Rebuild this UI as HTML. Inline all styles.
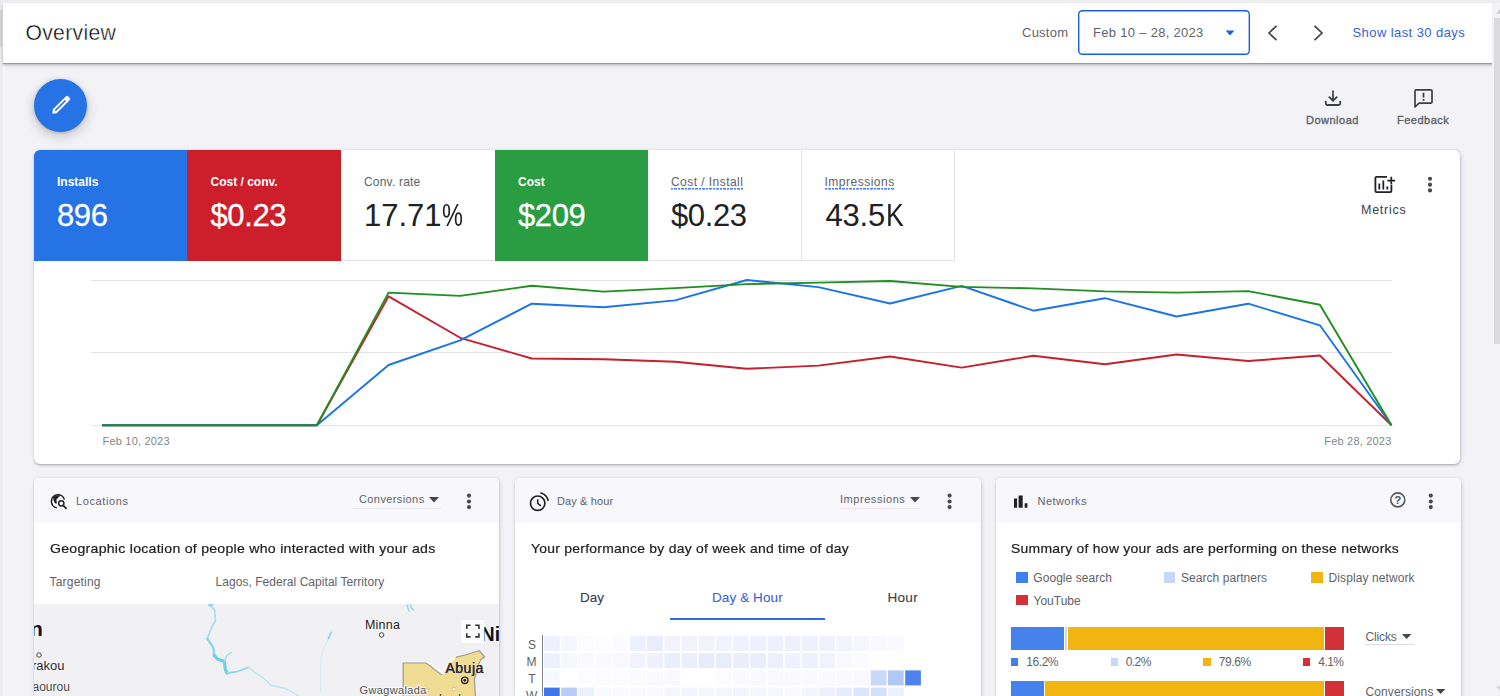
<!DOCTYPE html>
<html lang="en">
<head>
<meta charset="utf-8">
<title>Overview</title>
<style>
*{box-sizing:border-box;margin:0;padding:0}
html,body{width:1500px;height:696px;overflow:hidden}
body{background:#f2f2f7;font-family:"Liberation Sans",sans-serif;color:#202124;position:relative}
.abs{position:absolute}
.t{position:absolute;white-space:nowrap;line-height:1}
/* frame */
#topline{left:0;top:0;width:1500px;height:2.500px;background:#eeeef1}
#leftstrip{left:0;top:0;width:2.500px;height:696px;background:#ececf0}
#leftthumb{left:0;top:10px;width:2px;height:37px;background:#d4d4d9}
#leftstrip2{left:2.500px;top:64px;width:2.500px;height:632px;background:#f6f6f9}
#sbtrack{left:1492px;top:2.500px;width:8px;height:693.500px;background:#f3f3f7}
#sbthumb{left:1494.200px;top:18px;width:6px;height:325.600px;background:#dadadf}
/* header */
#hdr{left:2.500px;top:2.500px;width:1492px;height:60.500px;background:#fff;box-shadow:0 1px 0 #9a9a9e,0 2px 3px rgba(0,0,0,.28)}
#ttl{left:25.400px;top:21.600px;font-size:21.200px;color:#000;letter-spacing:.3px;-webkit-text-stroke:.4px #fff}
#custom{left:1022px;top:26px;font-size:13px;color:#5f6368;letter-spacing:.25px}
#datebox{left:1078px;top:9.500px;width:171.500px;height:45.500px;border-radius:4.500px;background:#fff;box-shadow:inset 0 0 0 1.400px #1a5fe4}
#datetxt{left:1093px;top:26px;font-size:13px;color:#5f6368;letter-spacing:.3px}
#showlast{left:1352.500px;top:25.700px;font-size:13px;color:#3760da;letter-spacing:.42px}
/* toolbar */
#fab{left:34px;top:79px;width:53px;height:53px;border-radius:50%;background:#2673e6;box-shadow:0 1px 3px rgba(60,64,67,.3),0 4px 8px 3px rgba(60,64,67,.15)}
.tool{font-size:11px;color:#5f6368;letter-spacing:.5px;-webkit-text-stroke:.35px #5f6368}
/* main card */
#card{left:34px;top:150px;width:1426px;height:314px;background:#fff;border-radius:6px;box-shadow:0 1px 2px rgba(60,64,67,.3),1px 1px 4px rgba(60,64,67,.18)}
.tile{position:absolute;top:150px;height:111px;width:154px}
.tl{position:absolute;left:23px;top:26px;font-size:12px;line-height:1;white-space:nowrap}
.tv{position:absolute;left:23px;top:49.800px;font-size:31px;letter-spacing:-.4px;line-height:1;white-space:nowrap}
.sel .tv{-webkit-text-stroke:.3px}
.sq{display:inline-block;transform-origin:0 50%}
.sel .tl{font-weight:bold;color:#fff}
.sel .tv{color:#fff}
.uns .tl{color:#5f6368;letter-spacing:.2px}
.uns .tv{color:#202124}
.dot{padding-bottom:.8px;background:repeating-linear-gradient(90deg,#4a7ff6 0,#4a7ff6 2.100px,transparent 2.100px,transparent 3.500px) 0 100%/100% 1.600px no-repeat}
/* bottom cards */
.bc{position:absolute;top:478px;height:230px;background:#fff;border-radius:5px 5px 0 0;box-shadow:0 1px 2px rgba(60,64,67,.25),1px 1px 4px rgba(60,64,67,.16);overflow:hidden}
.bch{position:absolute;left:0;top:0;right:0;height:45px;background:#f8f8fc}
.bct{font-size:11px;color:#5f6368;letter-spacing:.45px}
.bcs{font-size:13px;color:#202124;transform-origin:0 50%;letter-spacing:.25px;-webkit-text-stroke:.2px #202124}
.g12{font-size:12px;color:#5f6368}
.g13{font-size:12px;color:#5f6368}
.kd{position:absolute;width:4px;height:4px;border-radius:50%;background:#444746}
</style>
</head>
<body>
<div class="abs" id="topline"></div>
<div class="abs" id="leftstrip"></div>
<div class="abs" id="leftstrip2"></div>
<div class="abs" id="leftthumb"></div>

<!-- HEADER -->
<div class="abs" id="hdr"></div>
<div class="abs" id="sbtrack"></div>
<div class="abs" id="sbthumb"></div>
<svg class="abs" style="left:1496px;top:9px" width="5" height="5" viewBox="0 0 5 5"><path d="M0 4.500L4 .5V4.500z" fill="#c6c6cb"/></svg>
<svg class="abs" style="left:1496px;top:686px" width="5" height="5" viewBox="0 0 5 5"><path d="M0 .5H4V4.500z" fill="#cdcdd2"/></svg>
<div class="t" id="ttl">Overview</div>
<div class="t" id="custom">Custom</div>
<div class="abs" id="datebox"></div>
<div class="t" id="datetxt">Feb 10 – 28, 2023</div>
<svg class="abs" style="left:1225px;top:30px" width="10" height="6" viewBox="0 0 10 6"><path d="M0.5 0.5h9L5 5.5z" fill="#1a62e0"/></svg>
<svg class="abs" style="left:1266px;top:24px" width="14" height="18" viewBox="0 0 14 18"><path d="M10.5 1.8L3 9l7.500 7.200" fill="none" stroke="#444746" stroke-width="1.7"/></svg>
<svg class="abs" style="left:1311px;top:24px" width="14" height="18" viewBox="0 0 14 18"><path d="M3.500 1.800L11 9l-7.500 7.200" fill="none" stroke="#444746" stroke-width="1.700"/></svg>
<div class="t" id="showlast">Show last 30 days</div>

<!-- TOOLBAR -->
<div class="abs" id="fab"></div>
<svg class="abs" style="left:44.500px;top:89.400px" width="32" height="32" viewBox="-16 -16 32 32"><g transform="rotate(45)"><path d="M-2.700 -9.800a1.400 1.400 0 0 1 1.400-1.400h2.600a1.400 1.400 0 0 1 1.400 1.400V8.800L0 12.200L-2.700 8.800z" fill="#fff"/><path d="M-.8 -6.300h1.600V8h-1.600z" fill="#2673e6"/></g></svg>
<div class="t tool" id="dl" style="left:1306px;top:115px">Download</div>
<div class="t tool" id="fb" style="left:1397px;top:115px">Feedback</div>

<!-- MAIN CARD -->
<div class="abs" id="card"></div>
<div class="tile sel" style="left:34px;width:153px;background:#2673e6;border-radius:6px 0 0 0"><div class="tl">Installs</div><div class="tv">896</div></div>
<div class="tile sel" style="left:187px;background:#cc1f2b;width:154px"><div class="tl" style="left:23.500px">Cost / conv.</div><div class="tv" style="left:23.500px">$0.23</div></div>
<div class="tile uns" style="left:341px;border-bottom:1px solid #e3e3e6"><div class="tl">Conv. rate</div><div class="tv" style="letter-spacing:0">17.71<span class="sq" style="transform:scaleX(.76);margin-left:.5px">%</span></div></div>
<div class="tile sel" style="left:495px;background:#2a9d43;width:153px"><div class="tl">Cost</div><div class="tv">$209</div></div>
<div class="tile uns" style="left:648px;border-bottom:1px solid #e3e3e6;border-right:1px solid #e3e3e6;width:153.500px"><div class="tl"><span class="dot" style="letter-spacing:.45px">Cost / Install</span></div><div class="tv">$0.23</div></div>
<div class="tile uns" style="left:801.500px;border-bottom:1px solid #e3e3e6;border-right:1px solid #e3e3e6;width:153.500px"><div class="tl"><span class="dot" style="letter-spacing:.5px">Impressions</span></div><div class="tv" style="letter-spacing:-.2px;left:24px">43.5<span class="sq" style="transform:scaleX(.86);margin-left:.5px">K</span></div></div>

<!-- metrics icon + kebab -->
<svg class="abs" style="left:1373px;top:174px" width="24" height="21" viewBox="0 0 24 21"><path d="M14 2.800H3.600a1.200 1.200 0 0 0-1.200 1.200v13a1.200 1.200 0 0 0 1.200 1.200h13.600a1.200 1.200 0 0 0 1.200-1.200V11" fill="none" stroke="#202124" stroke-width="1.800"/><path d="M18.300 2.800v7.800M14.400 6.600h7.700" stroke="#202124" stroke-width="1.700" fill="none"/><path d="M6.300 9.500v6M10.300 6.500v9M14.300 12.500v3" stroke="#202124" stroke-width="1.800" fill="none"/></svg>
<div class="t" id="metrics" style="left:1361px;top:204.300px;font-size:12.500px;color:#3c4043;letter-spacing:.75px">Metrics</div>
<svg class="abs" style="left:1426px;top:174px" width="10" height="22" viewBox="0 0 10 22" fill="#444746"><circle cx="4.00" cy="4.80" r="2.050"/><circle cx="4.00" cy="10.65" r="2.050"/><circle cx="4.00" cy="16.40" r="2.050"/></svg>

<!-- CHART -->
<svg class="abs" style="left:34px;top:262px" width="1427" height="202" viewBox="34 262 1427 202">
<g stroke="#e4e4e8" stroke-width="1.200"><path d="M91 280.500H1392M91 352.500H1392M91 425.500H1392"/></g>
<g fill="none" stroke-width="1.900" stroke-linejoin="round">
<path stroke="#c5202c" d="M102.0 425.2L173.6 425.2L245.3 425.2L316.9 425.2L388.6 296.4L460.2 337.8L531.8 358.5L603.5 359.3L675.1 361.8L746.8 368.8L818.4 365.6L890.0 356.5L961.7 367.6L1033.3 355.8L1104.9 364.3L1176.6 354.5L1248.2 361.0L1319.9 355.5L1391.5 425.2"/>
<path stroke="#1a73e8" d="M102.0 425.2L173.6 425.2L245.3 425.2L316.9 425.2L388.6 365.0L460.2 340.4L531.8 303.7L603.5 307.2L675.1 300.4L746.8 280.0L818.4 287.1L890.0 303.5L961.7 285.8L1033.3 310.7L1104.9 298.2L1176.6 316.5L1248.2 303.7L1319.9 325.3L1391.5 425.2"/>
<path stroke="#1f8f1f" d="M102.0 425.2L173.6 425.2L245.3 425.2L316.9 425.2L388.6 292.6L460.2 295.9L531.8 285.8L603.5 291.6L675.1 288.1L746.8 284.1L818.4 282.6L890.0 281.0L961.7 286.9L1033.3 288.4L1104.9 291.4L1176.6 292.6L1248.2 291.1L1319.9 304.7L1391.5 425.2"/>
</g>
<text x="102.500" y="445" font-size="11" fill="#80868b" font-family="Liberation Sans, sans-serif" letter-spacing=".2">Feb 10, 2023</text>
<text x="1391.500" y="445" font-size="11" fill="#80868b" text-anchor="end" font-family="Liberation Sans, sans-serif" letter-spacing=".2">Feb 28, 2023</text>
</svg>

<!-- download / feedback icons -->
<svg class="abs" style="left:1323px;top:88px" width="20" height="20" viewBox="0 0 20 20"><path d="M10 2.500v10M5.800 8.600L10 12.700l4.200-4.100" fill="none" stroke="#3c4043" stroke-width="1.700"/><path d="M2.800 13v2.500a1.500 1.500 0 0 0 1.500 1.500h11.400a1.500 1.500 0 0 0 1.500-1.500V13" fill="none" stroke="#3c4043" stroke-width="1.800"/></svg>
<svg class="abs" style="left:1412px;top:87px" width="22" height="22" viewBox="0 0 22 22"><path d="M3 20V4a1.200 1.200 0 0 1 1.200-1.200h14.600A1.200 1.200 0 0 1 20 4v11a1.200 1.200 0 0 1-1.200 1.200H7z" fill="none" stroke="#3c4043" stroke-width="1.700" stroke-linejoin="round"/><path d="M11.500 5.800v4.600M11.500 12v1.800" stroke="#3c4043" stroke-width="1.800" fill="none"/></svg>

<!-- LOCATIONS CARD -->
<div class="bc" id="c1" style="left:34px;width:465px">
  <div class="bch"></div>
  <svg class="abs" style="left:16px;top:15px" width="18" height="17" viewBox="0 0 18 17"><path d="M14.370 6.590A6.600 6.600 0 1 0 6.850 14.800" fill="none" stroke="#202124" stroke-width="1.600"/><path d="M3 4.500C5 2 8 1.800 10 2.600C9 4.500 7.500 5 6.500 6.500C6 8 7.500 9 6.500 10.500C5.500 11.500 3.500 9 3 4.500z" fill="#202124"/><circle cx="11.300" cy="10.300" r="4.200" fill="#f8f8fc"/><circle cx="11.300" cy="10.300" r="2.600" fill="none" stroke="#202124" stroke-width="1.500"/><path d="M13.200 12.300L16.600 15.800" stroke="#202124" stroke-width="1.700"/></svg>
  <div class="t bct" style="left:42px;top:18px;letter-spacing:.6px">Locations</div>
  <div class="t bct" style="left:325px;top:16.100px;letter-spacing:.4px">Conversions</div>
  <svg class="abs" style="left:395px;top:19.200px" width="10" height="6" viewBox="0 0 10 6"><path d="M0 0h10L5 5.500z" fill="#444746"/></svg>
  <div class="abs" style="left:319px;top:30px;width:88px;height:1px;background:#e9e9ef"></div>
  <svg class="abs" style="left:431px;top:13px" width="10" height="22" viewBox="0 0 10 22" fill="#444746"><circle cx="4.00" cy="4.60" r="2.050"/><circle cx="4.00" cy="10.50" r="2.050"/><circle cx="4.00" cy="16.10" r="2.050"/></svg>
  <div class="t bcs" id="s1" style="left:15.500px;top:64px;transform:scaleX(1.084)">Geographic location of people who interacted with your ads</div>
  <div class="t g12" style="left:15.500px;top:98px;letter-spacing:.2px">Targeting</div>
  <div class="t g12" id="lagos" style="left:181.500px;top:98px;letter-spacing:.05px">Lagos, Federal Capital Territory</div>
  <!-- map -->
  <svg class="abs" style="left:0;top:126px" width="466" height="104" viewBox="34 604 466 104" font-family="Liberation Sans, sans-serif">
    <rect x="34" y="604" width="466" height="104" fill="#f1f0f3"/>
    <defs><filter id="bl" x="-5%" y="-5%" width="110%" height="110%"><feGaussianBlur stdDeviation=".45"/></filter></defs><g fill="none" stroke="#79d2e6" stroke-linejoin="round" stroke-linecap="round" filter="url(#bl)">
      <path d="M209.500 605.300h2.400" stroke-width="2.400" stroke="#7fd4e8"/>
      <path d="M210.700 605.500L214.600 610.300L215.500 620.700L212 626.900L209.300 633.100L207.200 638.600" stroke-width="1.700" stroke="#a6dfec"/>
      <path d="M207.200 638.600L213.400 647.600L214.100 655.200" stroke-width="2.200" stroke="#86d6e8"/>
      <path d="M214.100 655.200L217.600 659.300L224.500 661.400L225.200 669L227 673.100" stroke-width="3.200" stroke="#6fcfe3"/>
      <path d="M227 673.100L236.900 671.700L248.600 667.300" stroke-width="1.700" stroke="#8bd8e9"/>
      <path d="M248.600 667.300L254.800 672.400L263.100 677.900L271.400 685.500L285.200 688.300L297.600 695.200L303 699" stroke-width="1.400" stroke="#bde7f0"/>
      <path d="M224.500 661.400L226.600 655.900L231.400 652.400" stroke-width="1.400" stroke="#a3deec"/>
      <path d="M327.900 640L323.100 649.700L320.800 657.900L320.600 692" stroke-width="1.200" stroke="#d6eef4"/>
      <path d="M331 632.400L328.600 638.500" stroke-width="1.900" stroke="#8fd8e9"/>
      <path d="M407 605L409 611M410 604.500L411.500 608L413.500 610" stroke-width="1.400" stroke="#8fd8e9"/>
    </g>
    <path d="M403.200 663H426.400L441.600 674.700L454.400 657.600L467 654.500L479.200 650.700L482 654L484.800 656.800L481 659.500L479.200 663L474.400 679L476 708H403.200z" fill="#f1dc93" stroke="#9c9a94" stroke-width="1.200" stroke-linejoin="round"/>
    <path d="M426.400 663L441.600 674.700L454.400 657.600" fill="none" stroke="#fdfdfd" stroke-width="2.400" transform="translate(.8 -1.600)"/>
    <g stroke="#f6f5f8" stroke-width="3" stroke-linejoin="round" paint-order="stroke">
      <text x="30" y="636" font-size="21" font-weight="bold" fill="#111">n</text>
      <text x="480.800" y="641.300" font-size="19.300" font-weight="bold" fill="#111">Ni</text>
      <text x="32" y="669.500" font-size="13" fill="#2b2b2b" stroke-width="2.500">rakou</text>
      <text x="32.500" y="691" font-size="12" fill="#4a4a4a" stroke-width="2.500">aourou</text>
      <text x="365" y="629" font-size="12.500" fill="#222" letter-spacing=".2">Minna</text>
      <text x="359.500" y="693.500" font-size="11" fill="#555" stroke-width="2.500" letter-spacing=".35">Gwagwalada</text>
    </g>
    <text x="445.500" y="672.800" font-size="14" fill="#2a2a3c" stroke="#f1dc93" stroke-width="1.500" paint-order="stroke" letter-spacing=".5">Abuja</text>
    <text x="445.500" y="672.800" font-size="14" fill="#2a2a3c" stroke="#2a2a3c" stroke-width=".15" letter-spacing=".5">Abuja</text>
    <text x="439" y="702.200" font-size="11.500" fill="#3a3a44">Lugbe</text>
    <circle cx="39" cy="655" r="2.200" fill="#fff" stroke="#444" stroke-width="1"/>
    <circle cx="381.600" cy="634.900" r="2.200" fill="#fff" stroke="#444" stroke-width="1"/>
    <circle cx="464.800" cy="680.300" r="3.200" fill="#f1dc93" stroke="#26263a" stroke-width="1.400"/><circle cx="464.800" cy="680.300" r="1.400" fill="#26263a"/>
    <rect x="425.500" y="688.500" width="3" height="3" fill="#fff" stroke="#c9b870" stroke-width=".6"/>
    <rect x="452.500" y="687.500" width="3" height="3" fill="#fff" stroke="#c9b870" stroke-width=".6"/>
    <rect x="461.300" y="620" width="23" height="23" fill="#fdfdfe"/>
    <path d="M466.800 629v-3.700h3.700M475.200 625.300h3.700v3.700M478.900 633.200v3.700h-3.700M470.500 636.900h-3.700v-3.700" fill="none" stroke="#333" stroke-width="1.600"/>
  </svg>
</div>

<!-- DAY & HOUR CARD -->
<div class="bc" id="c2" style="left:515px;width:465.500px">
  <div class="bch"></div>
  <svg class="abs" style="left:13px;top:12px" width="24" height="22" viewBox="0 0 24 22"><circle cx="9.700" cy="13.200" r="7.200" fill="none" stroke="#202124" stroke-width="1.700"/><path d="M9.700 9.200v4.200l3.200 2.500" fill="none" stroke="#202124" stroke-width="1.500"/><path d="M12.310 2.720A10.800 10.800 0 0 1 20.260 10.950" fill="none" stroke="#202124" stroke-width="1.600"/><path d="M13.300 4.900A9 9 0 0 1 18.300 10.300" fill="none" stroke="#f8f8fc" stroke-width="1.300"/></svg>
  <div class="t bct" style="left:42px;top:18px;letter-spacing:.12px">Day &amp; hour</div>
  <div class="t bct" style="left:325px;top:16.100px;letter-spacing:.55px">Impressions</div>
  <svg class="abs" style="left:394.700px;top:19.200px" width="10" height="6" viewBox="0 0 10 6"><path d="M0 0h10L5 5.500z" fill="#444746"/></svg>
  <div class="abs" style="left:325px;top:30px;width:80px;height:1px;background:#eee6ec"></div>
  <svg class="abs" style="left:430px;top:13px" width="10" height="22" viewBox="0 0 10 22" fill="#444746"><circle cx="4.60" cy="4.60" r="2.050"/><circle cx="4.60" cy="10.50" r="2.050"/><circle cx="4.60" cy="16.10" r="2.050"/></svg>
  <div class="t bcs" id="s2" style="left:15.500px;top:64px;transform:scaleX(1.069)">Your performance by day of week and time of day</div>
  <div class="t" id="tab1" style="left:65px;top:112.900px;font-size:13.500px;-webkit-text-stroke:.1px;color:#3c4043">Day</div>
  <div class="t" id="tab2" style="left:197px;top:112.900px;font-size:13.500px;-webkit-text-stroke:.1px;letter-spacing:.1px;color:#3d64d8">Day &amp; Hour</div>
  <div class="t" id="tab3" style="left:372.500px;top:112.900px;font-size:13.500px;-webkit-text-stroke:.1px;letter-spacing:.3px;color:#3c4043">Hour</div>
  <div class="abs" style="left:155px;top:140px;width:154.500px;height:2px;background:#2a6fe8"></div>
  <div class="abs" style="left:27px;top:157px;width:1px;height:80px;background:#80868b"></div>
  <div class="t g12" style="left:13px;top:160.700px;width:8px;text-align:center">S</div>
  <div class="t g12" style="left:11.500px;top:177.800px;width:10px;text-align:center">M</div>
  <div class="t g12" style="left:13px;top:194.800px;width:8px;text-align:center">T</div>
  <div class="t g12" style="left:11px;top:212px;width:11px;text-align:center">W</div>
  <svg class="abs" id="heat" style="left:28.700px;top:158px" width="380" height="72" viewBox="0 0 380 72"><rect x="0.0" y="0.0" width="15.700" height="15" fill="#eef1fd"/><rect x="17.2" y="0.0" width="15.700" height="15" fill="#f5f6fe"/><rect x="34.4" y="0.0" width="15.700" height="15" fill="#fcfcff"/><rect x="51.6" y="0.0" width="15.700" height="15" fill="#fdfcfe"/><rect x="68.8" y="0.0" width="15.700" height="15" fill="#fbfafe"/><rect x="86.0" y="0.0" width="15.700" height="15" fill="#edf0fd"/><rect x="103.2" y="0.0" width="15.700" height="15" fill="#e8ecfc"/><rect x="120.4" y="0.0" width="15.700" height="15" fill="#f3f2fc"/><rect x="137.6" y="0.0" width="15.700" height="15" fill="#f2f2fc"/><rect x="154.8" y="0.0" width="15.700" height="15" fill="#f1f2fc"/><rect x="172.0" y="0.0" width="15.700" height="15" fill="#f0f2fc"/><rect x="189.2" y="0.0" width="15.700" height="15" fill="#eff1fc"/><rect x="206.4" y="0.0" width="15.700" height="15" fill="#eef0fc"/><rect x="223.6" y="0.0" width="15.700" height="15" fill="#eef0fc"/><rect x="240.8" y="0.0" width="15.700" height="15" fill="#eff0fc"/><rect x="258.0" y="0.0" width="15.700" height="15" fill="#eef0fc"/><rect x="275.2" y="0.0" width="15.700" height="15" fill="#f0f1fc"/><rect x="292.4" y="0.0" width="15.700" height="15" fill="#f3f3fd"/><rect x="309.6" y="0.0" width="15.700" height="15" fill="#f6f6fe"/><rect x="326.8" y="0.0" width="15.700" height="15" fill="#f8f8fe"/><rect x="344.0" y="0.0" width="15.700" height="15" fill="#f9f9fe"/><rect x="0.0" y="17.2" width="15.700" height="15" fill="#eef0fd"/><rect x="17.2" y="17.2" width="15.700" height="15" fill="#f7f7fe"/><rect x="34.4" y="17.2" width="15.700" height="15" fill="#f9f9fe"/><rect x="51.6" y="17.2" width="15.700" height="15" fill="#f9f9fe"/><rect x="68.8" y="17.2" width="15.700" height="15" fill="#f8f8fe"/><rect x="86.0" y="17.2" width="15.700" height="15" fill="#f3f3fd"/><rect x="103.2" y="17.2" width="15.700" height="15" fill="#eef0fd"/><rect x="120.4" y="17.2" width="15.700" height="15" fill="#e8eefd"/><rect x="137.6" y="17.2" width="15.700" height="15" fill="#eaeffd"/><rect x="154.8" y="17.2" width="15.700" height="15" fill="#e6ecfc"/><rect x="172.0" y="17.2" width="15.700" height="15" fill="#e8edfc"/><rect x="189.2" y="17.2" width="15.700" height="15" fill="#eaeefc"/><rect x="206.4" y="17.2" width="15.700" height="15" fill="#e9edfc"/><rect x="223.6" y="17.2" width="15.700" height="15" fill="#edf0fc"/><rect x="240.8" y="17.2" width="15.700" height="15" fill="#eff1fc"/><rect x="258.0" y="17.2" width="15.700" height="15" fill="#eef0fc"/><rect x="275.2" y="17.2" width="15.700" height="15" fill="#f1f2fd"/><rect x="292.4" y="17.2" width="15.700" height="15" fill="#f8f8fe"/><rect x="309.6" y="17.2" width="15.700" height="15" fill="#fbfbfe"/><rect x="0.0" y="34.4" width="15.700" height="15" fill="#f7f8fe"/><rect x="34.4" y="34.4" width="15.700" height="15" fill="#fcfcfe"/><rect x="51.6" y="34.4" width="15.700" height="15" fill="#fcfcfe"/><rect x="68.8" y="34.4" width="15.700" height="15" fill="#fcfcfe"/><rect x="86.0" y="34.4" width="15.700" height="15" fill="#fbfbfe"/><rect x="103.2" y="34.4" width="15.700" height="15" fill="#f9f9fe"/><rect x="120.4" y="34.4" width="15.700" height="15" fill="#f8f8fe"/><rect x="172.0" y="34.4" width="15.700" height="15" fill="#fcfcfe"/><rect x="189.2" y="34.4" width="15.700" height="15" fill="#fafafe"/><rect x="206.4" y="34.4" width="15.700" height="15" fill="#f8f8fe"/><rect x="223.6" y="34.4" width="15.700" height="15" fill="#f9f9fe"/><rect x="240.8" y="34.4" width="15.700" height="15" fill="#fafafe"/><rect x="258.0" y="34.4" width="15.700" height="15" fill="#fafafe"/><rect x="275.2" y="34.4" width="15.700" height="15" fill="#fafafe"/><rect x="292.4" y="34.4" width="15.700" height="15" fill="#fafafe"/><rect x="309.6" y="34.4" width="15.700" height="15" fill="#f8f8fe"/><rect x="326.8" y="34.4" width="15.700" height="15" fill="#c8d8f8"/><rect x="344.0" y="34.4" width="15.700" height="15" fill="#b0c8f5"/><rect x="361.2" y="34.4" width="15.700" height="15" fill="#4f82ee"/><rect x="0.0" y="51.6" width="15.700" height="15" fill="#3f75ea"/><rect x="17.2" y="51.6" width="15.700" height="15" fill="#b8ccf6"/><rect x="34.4" y="51.6" width="15.700" height="15" fill="#eaf0fd"/><rect x="51.6" y="51.6" width="15.700" height="15" fill="#f9f9fe"/><rect x="68.8" y="51.6" width="15.700" height="15" fill="#fafafe"/><rect x="86.0" y="51.6" width="15.700" height="15" fill="#fafafe"/><rect x="103.2" y="51.6" width="15.700" height="15" fill="#f8f8fe"/><rect x="120.4" y="51.6" width="15.700" height="15" fill="#f5f6fd"/><rect x="137.6" y="51.6" width="15.700" height="15" fill="#f3f4fd"/><rect x="154.8" y="51.6" width="15.700" height="15" fill="#f4f5fd"/><rect x="172.0" y="51.6" width="15.700" height="15" fill="#f4f5fd"/><rect x="189.2" y="51.6" width="15.700" height="15" fill="#f3f4fd"/><rect x="206.4" y="51.6" width="15.700" height="15" fill="#f5f6fd"/><rect x="223.6" y="51.6" width="15.700" height="15" fill="#f7f7fe"/><rect x="240.8" y="51.6" width="15.700" height="15" fill="#f8f8fe"/><rect x="258.0" y="51.6" width="15.700" height="15" fill="#f3f4fd"/><rect x="275.2" y="51.6" width="15.700" height="15" fill="#eef1fc"/><rect x="292.4" y="51.6" width="15.700" height="15" fill="#e6ecfc"/><rect x="309.6" y="51.6" width="15.700" height="15" fill="#dce6fb"/><rect x="326.8" y="51.6" width="15.700" height="15" fill="#d4e0fa"/><rect x="344.0" y="51.6" width="15.700" height="15" fill="#ecf1fd"/></svg>
</div>

<!-- NETWORKS CARD -->
<div class="bc" id="c3" style="left:995.500px;width:465px">
  <div class="bch"></div>
  <svg class="abs" style="left:17px;top:17px" width="16" height="14" viewBox="0 0 16 14"><path d="M1 3.600h3.100v9.200H1zM5.600 .6h4.100v12.200H5.600zM11.700 8.300h2.700v4.500h-2.700z" fill="#202124"/></svg>
  <div class="t bct" style="left:42px;top:18px">Networks</div>
  <svg class="abs" style="left:393px;top:13px" width="18" height="18" viewBox="0 0 18 18"><circle cx="8.800" cy="8.900" r="7" fill="none" stroke="#54575b" stroke-width="1.600"/><text x="8.800" y="13.100" font-size="11.500" text-anchor="middle" fill="#54575b" font-family="Liberation Sans, sans-serif" font-weight="bold">?</text></svg>
  <svg class="abs" style="left:430px;top:13px" width="10" height="22" viewBox="0 0 10 22" fill="#444746"><circle cx="4.80" cy="4.60" r="2.050"/><circle cx="4.80" cy="10.50" r="2.050"/><circle cx="4.80" cy="16.10" r="2.050"/></svg>
  <div class="t bcs" id="s3" style="left:15px;top:64px;transform:scaleX(1.071)">Summary of how your ads are performing on these networks</div>
  <div class="abs" style="left:20.700px;top:93.800px;width:11.700px;height:11.200px;background:#4080ee"></div>
  <div class="t g13" style="left:37.800px;top:93.800px;letter-spacing:.05px">Google search</div>
  <div class="abs" style="left:168.300px;top:93.800px;width:11.700px;height:11.200px;background:#c5d8fa"></div>
  <div class="t g13" style="left:185.500px;top:93.800px;letter-spacing:.05px">Search partners</div>
  <div class="abs" style="left:315.400px;top:93.800px;width:11.700px;height:11.200px;background:#f2b314"></div>
  <div class="t g13" style="left:333px;top:93.800px;letter-spacing:.1px">Display network</div>
  <div class="abs" style="left:20.700px;top:116.500px;width:11.700px;height:10.800px;background:#d03238"></div>
  <div class="t g13" style="left:38px;top:116.800px">YouTube</div>
  <!-- bar 1 -->
  <div class="abs" style="left:15.800px;top:149.200px;width:52.500px;height:22.800px;background:#4682ec"></div>
  <div class="abs" style="left:69.800px;top:149.200px;width:2px;height:22.800px;background:#c5d8fa"></div>
  <div class="abs" style="left:72.800px;top:149.200px;width:255.700px;height:22.800px;background:#f0b510"></div>
  <div class="abs" style="left:329.500px;top:149.200px;width:18.600px;height:22.800px;background:#d03238"></div>
  <div class="abs" style="left:15px;top:180px;width:7.500px;height:7.500px;background:#4080ee"></div>
  <div class="t g12" style="left:30.800px;top:178px;letter-spacing:-.45px">16.2%</div>
  <div class="abs" style="left:115.300px;top:180px;width:7px;height:7.500px;background:#c5d8fa"></div>
  <div class="t g12" style="left:130.300px;top:178px;letter-spacing:-.6px">0.2%</div>
  <div class="abs" style="left:207.800px;top:180px;width:7.500px;height:7.500px;background:#f2b314"></div>
  <div class="t g12" style="left:223.200px;top:178px;letter-spacing:-.4px">79.6%</div>
  <div class="abs" style="left:307px;top:180px;width:7.500px;height:7.500px;background:#d03238"></div>
  <div class="t g12" style="left:322.800px;top:178px;letter-spacing:-.55px">4.1%</div>
  <div class="t g12" style="left:370px;top:152.500px;letter-spacing:-.15px;color:#5f6368">Clicks</div>
  <svg class="abs" style="left:406px;top:155.800px" width="10" height="6" viewBox="0 0 10 6"><path d="M0 0h9.400L4.700 5z" fill="#444746"/></svg>
  <div class="abs" style="left:369.500px;top:166px;width:49px;height:1px;background:#dcdce0"></div>
  <!-- bar 2 -->
  <div class="abs" style="left:15.800px;top:202.800px;width:32.500px;height:23px;background:#4682ec"></div>
  <div class="abs" style="left:49.800px;top:202.800px;width:278.700px;height:23px;background:#f0b510"></div>
  <div class="abs" style="left:329.500px;top:202.800px;width:18.600px;height:23px;background:#d03238"></div>
  <div class="t g12" style="left:370px;top:207.500px;letter-spacing:.12px;color:#5f6368">Conversions</div>
  <svg class="abs" style="left:440.300px;top:210.500px" width="10" height="6" viewBox="0 0 10 6"><path d="M0 0h9.400L4.700 5z" fill="#444746"/></svg>
</div>


</body>
</html>
